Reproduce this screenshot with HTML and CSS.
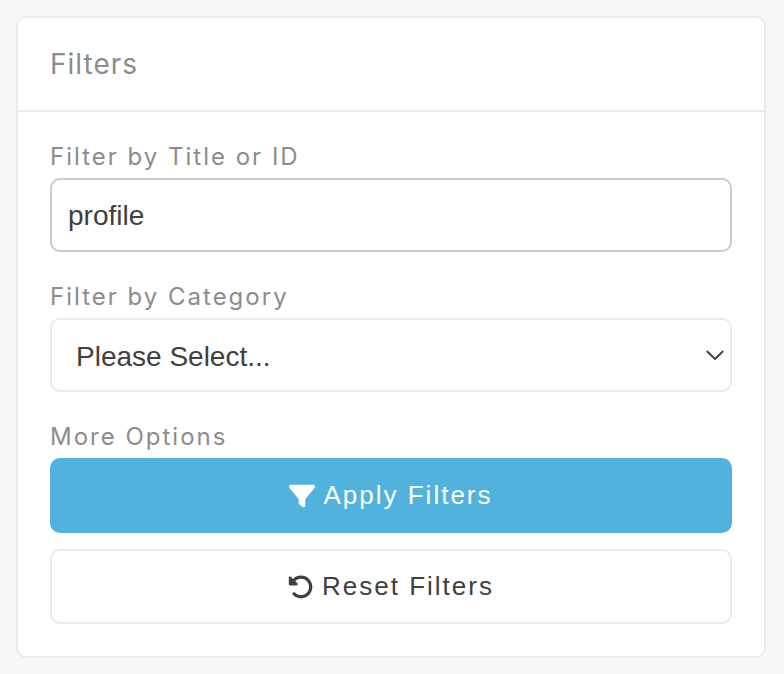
FILE: index.html
```html
<!DOCTYPE html>
<html lang="en">
<head>
<meta charset="utf-8">
<meta name="viewport" content="width=device-width, initial-scale=1">
<title>Filters</title>
<link rel="stylesheet" href="styles.css">
</head>
<body>
<section class="card">
  <header class="card-header"><h2 class="card-title">Filters</h2></header>
  <form class="card-body">
    <div class="field">
      <label class="label" for="title">Filter by Title or ID</label>
      <input class="control" id="title" type="text" value="profile">
    </div>
    <div class="field">
      <label class="label" for="category">Filter by Category</label>
      <div class="select-wrap">
        <select class="control control-select" id="category">
          <option>Please Select...</option>
        </select>
        <svg class="chevron" viewBox="0 0 18 12" aria-hidden="true"><path d="M1.300 2.500 L9 10 L16.700 2.500" fill="none" stroke="currentColor" stroke-width="1.900" stroke-linecap="round" stroke-linejoin="round"/></svg>
      </div>
    </div>
    <div class="options" role="group" aria-labelledby="more">
      <span class="label" id="more">More Options</span>
      <div class="buttons">
        <button class="btn btn-primary" type="button">
          <svg class="icon" viewBox="0 0 512 512" aria-hidden="true"><path fill="currentColor" d="M3.9 54.9C10.5 40.9 24.5 32 40 32H472c15.5 0 29.5 8.9 36.1 22.9s4.6 30.5-5.2 42.5L320 320.9V448c0 12.1-6.8 23.2-17.7 28.6s-23.8 4.300-33.500-3l-64-48c-8.100-6-12.800-15.500-12.800-25.600V320.900L9 97.300C-.7 85.400-2.800 68.800 3.900 54.900z"/></svg>
          <span>Apply Filters</span>
        </button>
        <button class="btn btn-plain" type="button">
          <svg class="icon" viewBox="0 0 512 512" aria-hidden="true"><path fill="currentColor" d="M48.5 224H40c-13.3 0-24-10.7-24-24V72c0-9.7 5.8-18.5 14.8-22.2s19.3-1.7 26.2 5.2L98.6 96.6c87.6-86.5 228.7-86.2 315.8 1c87.5 87.5 87.5 229.3 0 316.8s-229.3 87.500-316.800 0c-12.500-12.500-12.500-32.800 0-45.300s32.800-12.500 45.300 0c62.500 62.500 163.800 62.500 226.300 0s62.500-163.800 0-226.300c-62.200-62.200-162.700-62.500-225.300-1L185 183c6.900 6.900 8.900 17.200 5.200 26.200s-12.500 14.800-22.200 14.800H48.500z"/></svg>
          <span>Reset Filters</span>
        </button>
      </div>
    </div>
  </form>
</section>
</body>
</html>
```
FILE: styles.css
```css
* {
  box-sizing: border-box;
}

body {
  margin: 0;
  padding: 16px 18px 16px 16px;
  background: #f7f7f7;
  color: #404040;
  font-family: Inter, "Liberation Sans", sans-serif;
}

.card {
  background: #fff;
  border: 2px solid #ebebeb;
  border-radius: 10px;
}

.card-header {
  padding: 28px 32px;
  border-bottom: 2px solid #ebebeb;
}

.card-title {
  margin: 0;
  color: #8c8c8c;
  font-size: 28px;
  font-weight: 400;
  line-height: 36px;
  letter-spacing: 1px;
}

.card-body {
  display: flex;
  flex-direction: column;
  gap: 26px;
  padding: 26px 32px 32px;
}

.label {
  display: block;
  padding-bottom: 2px;
  color: #8c8c8c;
  font-size: 24px;
  line-height: 38px;
  letter-spacing: 2px;
}

.control {
  display: block;
  width: 100%;
  height: 74px;
  margin: 0;
  padding: 2px 16px 0;
  border: 2px solid #cacaca;
  border-radius: 10px;
  background: #fff;
  color: #404040;
  font-family: "Liberation Sans", sans-serif;
  font-size: 28px;
}

.select-wrap {
  position: relative;
}

.control-select {
  padding: 2px 40px 0 24px;
  border-color: #ebebeb;
  appearance: none;
}

.chevron {
  position: absolute;
  top: 50%;
  right: 8px;
  width: 18px;
  height: 12px;
  margin-top: -6px;
  pointer-events: none;
}

.buttons {
  display: flex;
  flex-direction: column;
  gap: 16px;
}

.btn {
  display: flex;
  align-items: center;
  justify-content: center;
  gap: 8px;
  height: 75px;
  padding: 0 16px;
  border: 2px solid #ebebeb;
  border-radius: 10px;
  background: #fff;
  color: #404040;
  font-family: "Liberation Sans", sans-serif;
  font-size: 26px;
  letter-spacing: 2px;
}

.btn-primary {
  border-color: #52b2de;
  background: #52b2de;
  color: #fff;
}

.icon {
  width: 26px;
  height: 26px;
}
```
